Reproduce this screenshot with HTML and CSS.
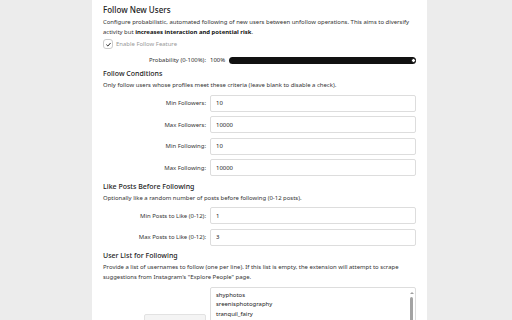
FILE: index.html
```html
<!DOCTYPE html>
<html lang="en">
<head>
    <meta charset="UTF-8">
    <meta name="viewport" content="width=device-width, initial-scale=1.0">
    <title>Follow Settings</title>
    <link rel="stylesheet" href="styles.css">
</head>
<body>
    <div class="panel">
        <h2>Follow New Users</h2>
        <p class="desc">Configure probabilistic, automated following of new users between unfollow operations. This aims to diversify activity but <b>increases interaction and potential risk</b>.</p>

        <label class="check">
            <span class="box"><svg viewBox="0 0 10 10" width="7" height="7"><path d="M2 5.2 L4.1 7.2 L8 2.8" fill="none" stroke="#111" stroke-width="1.3"/></svg></span>
            Enable Follow Feature
        </label>

        <div class="row prob">
            <span class="label">Probability (0-100%):</span>
            <div class="slider-wrap">
                <span class="value">100%</span>
                <input type="range" min="0" max="100" value="100">
            </div>
        </div>

        <h3>Follow Conditions</h3>
        <p class="desc">Only follow users whose profiles meet these criteria (leave blank to disable a check).</p>
        <div class="fields">
            <label class="label">Min Followers:</label><input type="text" value="10">
            <label class="label">Max Followers:</label><input type="text" value="10000">
            <label class="label">Min Following:</label><input type="text" value="10">
            <label class="label">Max Following:</label><input type="text" value="10000">
        </div>

        <h3>Like Posts Before Following</h3>
        <p class="desc">Optionally like a random number of posts before following (0-12 posts).</p>
        <div class="fields">
            <label class="label">Min Posts to Like (0-12):</label><input type="text" value="1">
            <label class="label">Max Posts to Like (0-12):</label><input type="text" value="3">
        </div>

        <h3>User List for Following</h3>
        <p class="desc">Provide a list of usernames to follow (one per line). If this list is empty, the extension will attempt to scrape suggestions from Instagram's "Explore People" page.</p>
        <div class="fields list">
            <button class="side-btn"></button>
            <div class="textarea-wrap">
                <textarea>shyphotos
sreenisphotography
tranquil_fairy
lensandlight
urban.frames
goldenhour.daily</textarea>
                <div class="scrollbar">
                    <span class="arrow"></span>
                    <span class="thumb"></span>
                </div>
            </div>
        </div>
    </div>
</body>
</html>
```

FILE: styles.css
```css
body {
    margin: 0;
    background: #ececec;
    font-family: "Noto Sans", "Open Sans", sans-serif;
    color: #222;
}
.panel {
    margin-left: 92px;
    width: 313px;
    height: 320px;
    padding: 4px 11px 0;
    background: white;
    overflow: hidden;
}
h2 {
    font-size: 8px;
    font-weight: 500;
    line-height: 12px;
    margin: 0 0 2px;
}
h3 {
    font-size: 7px;
    font-weight: 500;
    line-height: 10px;
    margin: 4px 0 2px;
}
.desc {
    font-size: 5.95px;
    line-height: 9.5px;
    color: #333;
    margin: 0;
}
.desc b {
    color: #111;
}
.check {
    display: flex;
    align-items: center;
    gap: 3px;
    height: 10px;
    margin-top: 2px;
    font-size: 5.95px;
    color: #999;
}
.box {
    width: 8px;
    height: 8px;
    border: 1px solid #ccc;
    border-radius: 3px;
    display: flex;
    align-items: center;
    justify-content: center;
}
.row, .fields {
    display: grid;
    grid-template-columns: 103px 206px;
    column-gap: 4px;
    align-items: center;
}
.label {
    text-align: right;
    font-size: 5.95px;
    color: #333;
}
.prob {
    height: 10px;
    margin-top: 6px;
}
.slider-wrap {
    display: flex;
    align-items: center;
    gap: 4px;
    font-size: 5.95px;
}
.slider-wrap input {
    -webkit-appearance: none;
    appearance: none;
    flex: 1;
    height: 7px;
    margin: 0;
    border-radius: 4px;
    background: #111;
}
.slider-wrap input::-webkit-slider-thumb {
    -webkit-appearance: none;
    width: 5px;
    height: 5px;
    border-radius: 50%;
    background: white;
    border: 1px solid #111;
}
.fields {
    row-gap: 4.5px;
    margin-top: 4px;
}
.fields input, .fields textarea {
    box-sizing: border-box;
    height: 17px;
    border: 1px solid #ddd;
    border-radius: 2px;
    padding: 0 5px;
    font-family: inherit;
    font-size: 5.95px;
    color: #222;
    outline: none;
}
.fields + h3 {
    margin-top: 5.5px;
}
.list {
    align-items: start;
    margin-top: 4.5px;
}
.textarea-wrap {
    position: relative;
}
.fields textarea {
    display: block;
    width: 100%;
    height: 60px;
    padding: 3px 5px;
    line-height: 9.5px;
    resize: none;
    overflow: hidden;
}
.scrollbar {
    position: absolute;
    top: 2px;
    right: 2px;
    width: 5px;
    display: flex;
    flex-direction: column;
    align-items: center;
    gap: 3px;
}
.arrow {
    width: 0;
    height: 0;
    border-left: 2px solid transparent;
    border-right: 2px solid transparent;
    border-bottom: 2px solid #a0a0a0;
    margin-top: 3px;
}
.thumb {
    width: 3.5px;
    height: 50px;
    background: #a3a3a3;
    border-radius: 2px;
}
.side-btn {
    justify-self: end;
    width: 62px;
    height: 14px;
    margin-top: 27px;
    background: #f4f4f4;
    border: 1px solid #e2e2e2;
    border-radius: 2px;
}
```
